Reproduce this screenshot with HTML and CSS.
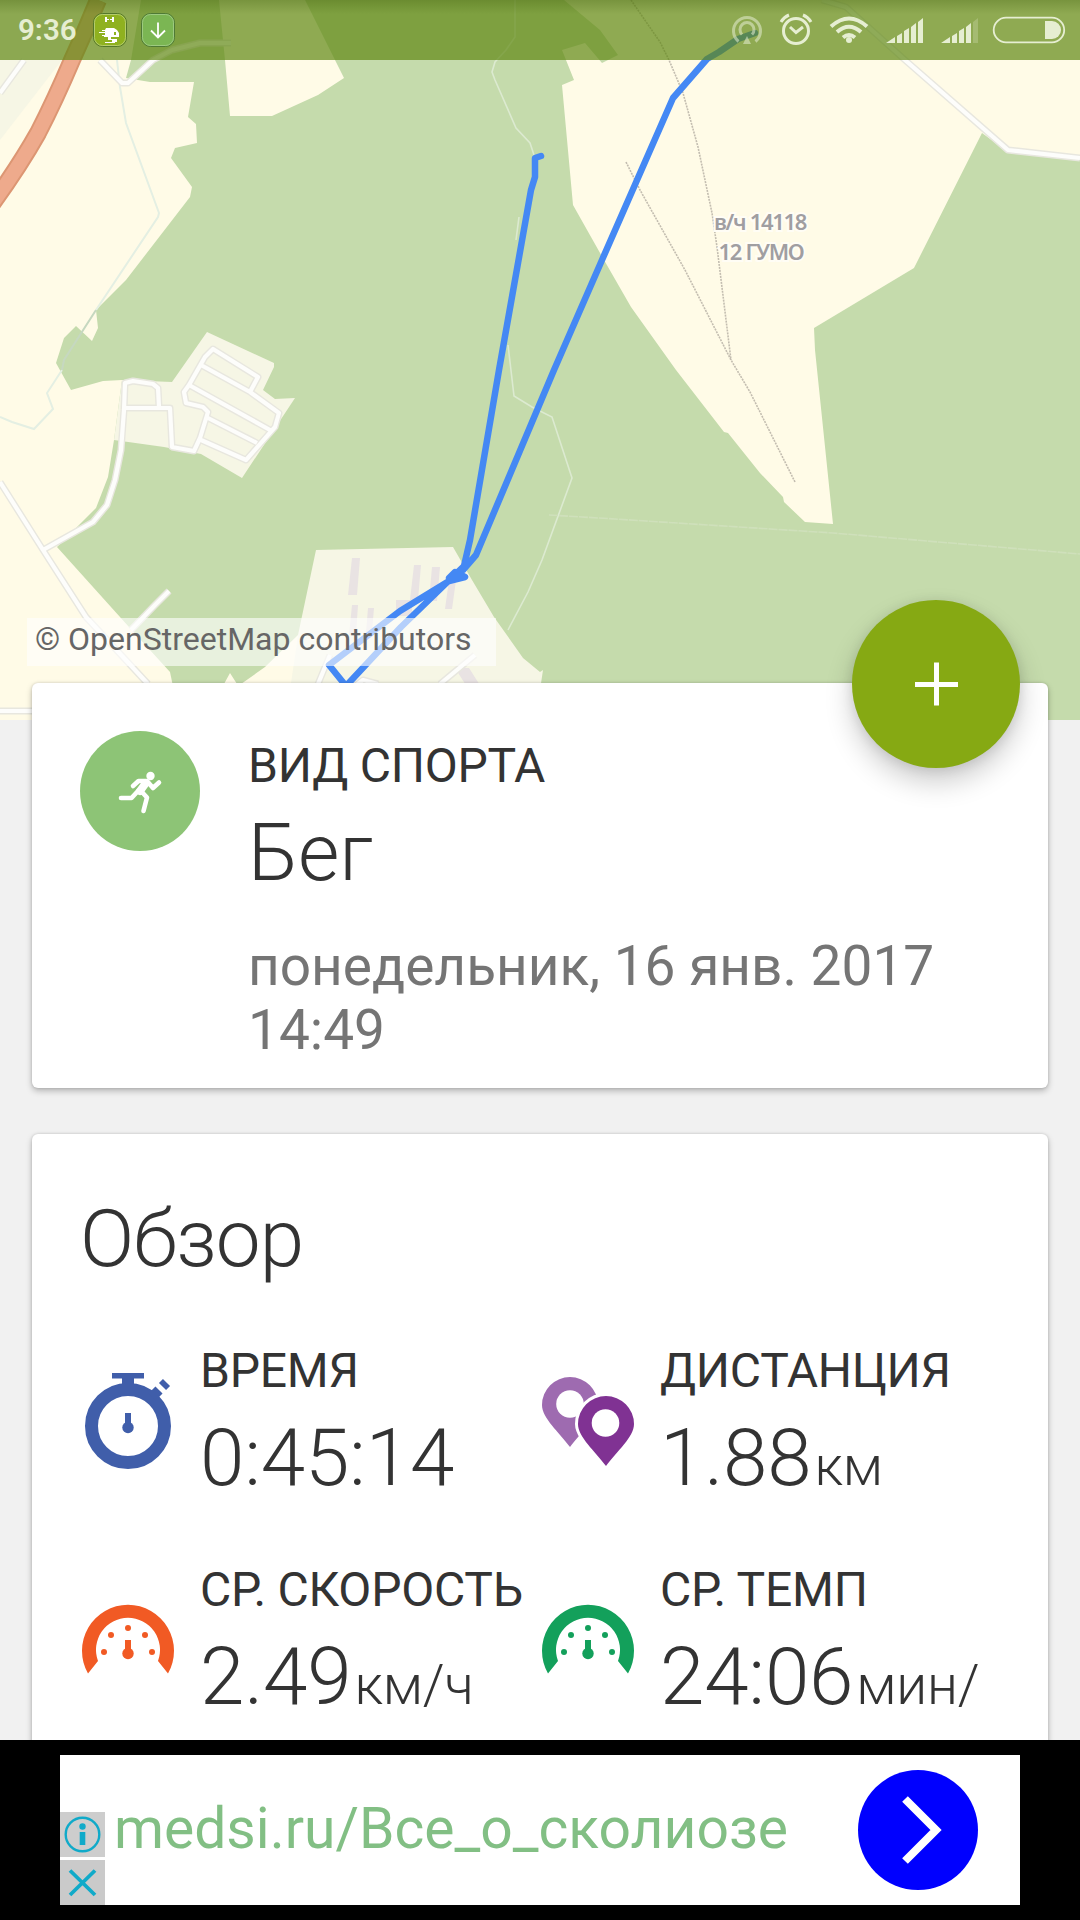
FILE: index.html
```html
<!DOCTYPE html>
<html lang="ru">
<head>
  <meta charset="UTF-8">
  <meta name="viewport" content="width=device-width, initial-scale=1.0">
  <title>Бег</title>
  <link rel="stylesheet" href="styles.css">
</head>
<body>
  <div class="screen">
    <header class="status-bar">
      <span class="clock">9:36</span>
      <svg class="app-icon" width="34" height="34" viewBox="0 0 34 34">
        <rect x=".5" y=".5" width="33" height="33" rx="9" fill="#8fb11f" stroke="#55782a"/>
        <rect x="1.5" y="1.5" width="31" height="31" rx="8" fill="none" stroke="#b5cc6c"/>
        <path d="M12 4h2v5h-2zM19 4h2v5h-2zM14 6h2v1h-2zM17 6h2v1h-2z" fill="#fff"/>
        <path d="M13 15h8l3 2 2 3v4h-8v2h6v3h-2v1H12v-1h7v-2h-4v-3h-4v-1H9v-1h3v-2H6v-1h6v-1H9v-1h3z" fill="#fff"/>
        <rect x="21" y="19" width="2" height="3" fill="#8fb11f"/>
      </svg>
      <svg class="app-icon" width="34" height="34" viewBox="0 0 34 34">
        <rect x=".5" y=".5" width="33" height="33" rx="9" fill="#7bb653" stroke="#4f7a35"/>
        <rect x="1.5" y="1.5" width="31" height="31" rx="8" fill="none" stroke="#9dca80"/>
        <path d="M17 9.5v15M10 17.500l7 7 7-7" fill="none" stroke="#fff" stroke-width="1.800"/>
      </svg>
      <svg class="system-icons" width="340" height="60" viewBox="730 0 340 60" fill="none" stroke="#e6eed2">
        <g stroke-width="3" opacity=".55">
          <path d="M738.500 41.500a13.500 13.500 0 1 1 17 0"/>
          <path d="M742 34.500a7 7 0 1 1 10 0"/>
          <path d="M747 36l4 8h-8z" fill="#e6eed2" stroke="none"/>
        </g>
        <g stroke-width="3">
          <circle cx="796" cy="31" r="12.500"/>
          <path d="M790 27l6 5.500 7-5.500"/>
          <path d="M781 22q3-5 8-7M811 22q-3-5-8-7"/>
        </g>
        <g stroke-width="4">
          <path d="M831 26.500q18-16 36 0"/>
          <path d="M837 32q12-10.500 24 0"/>
          <path d="M843 37.500q6-5 12 0"/>
          <circle cx="849" cy="40" r="3" fill="#e6eed2" stroke="none"/>
        </g>
        <g fill="#e6eed2" stroke="none">
          <path d="M886 43l9-6v6zM897 36l5-3v10h-5zM904 31l5-3v15h-5zM911 27l5-4v20h-5zM918 22l5-4v25h-5z"/>
          <path d="M941 43l9-6v6zM952 36l5-3v10h-5zM959 31l5-3v15h-5zM966 27l5-4v20h-5z"/>
          <path d="M973 22l5-4v25h-5z" opacity=".25"/>
          <path d="M1045 21h7a9 9 0 0 1 0 18h-7z"/>
        </g>
        <rect x="993.700" y="17.700" width="70.500" height="24.600" rx="12.300" stroke-width="1.800"/>
      </svg>
    </header>

    <div class="map">
      <svg width="1080" height="720" viewBox="0 0 1080 720">
        <rect width="1080" height="720" fill="#c5dbac"/>
        <!-- fields -->
        <g fill="#fffbe7">
          <path d="M0 0H141L131 60 126 78 150 82H194L188 117 196 124 197 143 175 148 171 158 192 187 190 197 126 280 96 310 98 328 92 341 76 326 64 338 56 363 71 390 103 381 122 380 114 440 108 477 96 508 57 547 129 627 170 672 180 720H0Z"/>
          <path d="M219 0 225 60 230 116H272L318 95 344 78 336 62 305 0Z"/>
          <path d="M564 0 600 30 618 55 602 63 585 43 562 50 574 80 562 85 573 205 604 260 631 307 676 370 724 432 728 433 760 473 783 497 784 502 805 522 833 524 815 350 814 328 914 268 982 133 1008 152 1080 158V0Z"/>
          <path d="M241 684 265 667 298 635 330 684ZM224 684 230 673 237 684Z"/>
        </g>
        <g fill="#f6f6e5">
          <path d="M0 0H90L62 60 0 140Z"/>
          <path d="M122 380 172 382 207 332 274 363V367L263 390 275 399 295 398 242 478 201 454 164 447 114 440Z"/>
          <path d="M316 550 453 547 472 580 494 617 523 658 540 672 543 670 540 690H290L298 635Z"/>
        </g>
        <!-- buildings -->
        <path d="M352 558h8l-3 37h-9zM414 565h7l-3 35h-8zM432 567h8l-3 34h-8zM449 580h7l-4 29h-7zM396 600h16v16h-16zM352 605h6l-2 30h-7zM368 608h6l-2 24h-6zM455 668h14l14 22h-14z" fill="#e9e3e3"/>
        <!-- motorway -->
        <path d="M98 0Q86 30 72 60Q55 100 38 133Q20 165 -8 204" fill="none" stroke="#dc9673" stroke-width="18"/>
        <path d="M98 0Q86 30 72 60Q55 100 38 133Q20 165 -8 204" fill="none" stroke="#eeaa8c" stroke-width="14"/>
        <!-- streams and paths -->
        <g fill="none" stroke-width="1.600">
          <path d="M117 60 120 87 126 123 159 213 158 217 96 310M62 370 47 393 53 409 34 429 12 422 0 417" stroke="#e4efe3" stroke-width="2"/>
          <path d="M96 310 64 360 62 370" stroke="#c6d8c0" stroke-width="2"/>
          <path d="M515 0V37L506 50 495 62 492 72 495 80 516 128 530 143 534 155M519 217 516 240M508 345 514 396 532 407 552 417 572 478 542 560 528 592 508 630" stroke="#dcead0"/>
          <path d="M549 515 599 518 833 533 1080 554" stroke="#cfe0bb" stroke-dasharray="9 1"/>
          <path d="M631 0 660 42 669 60 683 93 698 147 712 213 717 247 731 360M626 162 640 190 685 270 731 360 750 392 795 482" stroke="#c3bdb0" stroke-dasharray="2 1"/>
        </g>
        <!-- roads -->
        <g fill="none" stroke-linejoin="round">
          <g stroke="#e8e7df" stroke-width="7">
            <path d="M24 60 0 93M100 60 122 83H128L153 60 172 50 200 43H231M822 0 846 7 905 60 1008 150 1080 158"/>
            <path d="M0 482 43 550 86 617 148 684M43 550 93 522 107 505 115 480 121 450 124 410 125 383 133 381 153 384 158 388 159 407M0 711H40"/>
            <path d="M124 408H170L172 447 194 451 200 438 208 412 203 407 186 403 184 392 189 385 205 357 213 349 258 377 250 392M201 365 250 392 279 413 275 427 246 460 201 440M189 385 270 430M208 418 257 443"/>
            <path d="M169 591 155 605 131 630M318 684 330 655M440 684 475 655M350 690 363 680 378 684"/>
          </g>
          <g stroke="#fdfdfb" stroke-width="4.200">
            <path d="M24 60 0 93M100 60 122 83H128L153 60 172 50 200 43H231M822 0 846 7 905 60 1008 150 1080 158"/>
            <path d="M0 482 43 550 86 617 148 684M43 550 93 522 107 505 115 480 121 450 124 410 125 383 133 381 153 384 158 388 159 407M0 711H40"/>
            <path d="M124 408H170L172 447 194 451 200 438 208 412 203 407 186 403 184 392 189 385 205 357 213 349 258 377 250 392M201 365 250 392 279 413 275 427 246 460 201 440M189 385 270 430M208 418 257 443"/>
            <path d="M169 591 155 605 131 630M318 684 330 655M440 684 475 655M350 690 363 680 378 684"/>
          </g>
        </g>
        <!-- recorded track -->
        <path d="M755 33 738 39 719 52 707 59 673 98 602 260 554 370 476 555 463 570 449 578 455 572 465 577 449 581 400 611 329 665 346 686 401 627 464 566 470 540 499 370 531 190 535 177V158L541 156" fill="none" stroke="#4488f4" stroke-width="6.500" stroke-linejoin="round" stroke-linecap="round"/>
        <g class="map-label">
          <text x="760" y="230">в/ч 14118</text>
          <text x="761" y="260">12 ГУМО</text>
        </g>
      </svg>
      <div class="attribution">© OpenStreetMap contributors</div>
    </div>

    <main class="content">
      <section class="card sport-card">
        <button class="fab" aria-label="Добавить">
          <svg width="44" height="44" viewBox="0 0 44 44"><path d="M22.500 .5v43M1 22.500h43" stroke="#fff" stroke-width="5"/></svg>
        </button>
        <svg class="sport-icon" width="120" height="120" viewBox="0 0 120 120">
          <circle cx="60" cy="60" r="60" fill="#8dc476"/>
          <circle cx="70.500" cy="45" r="4.200" fill="#fff"/>
          <g fill="none" stroke="#fff" stroke-width="4.600" stroke-linecap="round" stroke-linejoin="round">
            <path d="M53 55 58.500 50H67L73 57 79 51.500"/>
            <path d="M58 60 51.500 67H41"/>
            <path d="M61 60 67 66.500 63.500 80"/>
            <path d="M65.500 52.500 60 60" stroke-width="8"/>
          </g>
        </svg>
        <div class="sport-info">
          <div class="label">ВИД СПОРТА</div>
          <div class="value">Бег</div>
          <div class="date">понедельник, 16 янв. 2017 14:49</div>
        </div>
      </section>

      <section class="card overview-card">
        <h2>Обзор</h2>
        <div class="stats">
          <div class="stat">
            <svg width="118" height="166" viewBox="0 0 118 166" fill="#405eaa">
              <circle cx="46" cy="87" r="36.500" fill="none" stroke="#405eaa" stroke-width="13"/>
              <path d="M30 34h32v5.500H52V48H40v-8.500H30zM43 74h6v12h-6z"/>
              <circle cx="46" cy="88.500" r="5.700"/>
              <path d="M70 58l7-7M80.500 47.500l4-4" stroke="#405eaa" stroke-width="10"/>
            </svg>
            <div>
              <div class="label">ВРЕМЯ</div>
              <div class="value">0:45:14</div>
            </div>
          </div>
          <div class="stat">
            <svg width="118" height="166" viewBox="0 0 118 166">
              <path d="M28 108C17 93 0 79 0 66a28 28 0 0 1 56 0C56 79 39 93 28 108Z" fill="#9e6bb0"/>
              <circle cx="28" cy="65" r="13.800" fill="#fff"/>
              <path d="M64 127C53 112 36 98 36 85a28 28 0 0 1 56 0C92 98 75 112 64 127Z" fill="#803293" stroke="#fff" stroke-width="6" paint-order="stroke"/>
              <circle cx="63.500" cy="84" r="13.800" fill="#fff"/>
            </svg>
            <div>
              <div class="label">ДИСТАНЦИЯ</div>
              <div class="value">1.88<span class="unit">км</span></div>
            </div>
          </div>
          <div class="stat">
            <svg class="gauge-orange" width="118" height="166" viewBox="0 0 118 166">
              <path d="M6 115.500A46 46 0 1 1 86 115.500L76 103A32 32 0 1 0 16 103Z"/>
              <path d="M43 82h6v10h-6z"/>
              <circle cx="46" cy="95.500" r="5.700"/>
              <circle cx="22" cy="94" r="3"/><circle cx="29" cy="77" r="3"/><circle cx="46" cy="70" r="3"/><circle cx="63" cy="77" r="3"/><circle cx="70" cy="94" r="3"/>
            </svg>
            <div>
              <div class="label">СР. СКОРОСТЬ</div>
              <div class="value">2.49<span class="unit">км/ч</span></div>
            </div>
          </div>
          <div class="stat">
            <svg class="gauge-green" width="118" height="166" viewBox="0 0 118 166">
              <path d="M6 115.500A46 46 0 1 1 86 115.500L76 103A32 32 0 1 0 16 103Z"/>
              <path d="M43 82h6v10h-6z"/>
              <circle cx="46" cy="95.500" r="5.700"/>
              <circle cx="22" cy="94" r="3"/><circle cx="29" cy="77" r="3"/><circle cx="46" cy="70" r="3"/><circle cx="63" cy="77" r="3"/><circle cx="70" cy="94" r="3"/>
            </svg>
            <div>
              <div class="label">СР. ТЕМП</div>
              <div class="value">24:06<span class="unit">мин/</span></div>
            </div>
          </div>
        </div>
      </section>
    </main>

    <footer class="ad">
      <div class="ad-banner">
        <div class="ad-controls">
          <svg width="45" height="45" viewBox="0 0 45 45">
            <rect width="45" height="45" fill="#cdcdcd"/>
            <circle cx="22.500" cy="22.500" r="16.800" fill="none" stroke="#10aac9" stroke-width="2.400"/>
            <circle cx="22.500" cy="14.500" r="3.200" fill="#10aac9"/>
            <rect x="19.700" y="20" width="5.600" height="13" fill="#10aac9"/>
          </svg>
          <svg width="45" height="45" viewBox="0 0 45 45">
            <rect width="45" height="45" fill="#cacaca"/>
            <path d="M10 10.500 35 35M35 10.500 10 35" stroke="#10aac9" stroke-width="3.800"/>
          </svg>
        </div>
        <span class="ad-text">medsi.ru/Все_о_сколиозе</span>
        <svg class="ad-arrow" width="120" height="120" viewBox="0 0 120 120">
          <circle cx="60" cy="60" r="60" fill="#00f"/>
          <path d="M47 29 78 60 47 91" fill="none" stroke="#fff" stroke-width="8"/>
        </svg>
      </div>
    </footer>
  </div>
</body>
</html>
```
FILE: styles.css
```css
* {
  margin: 0;
  padding: 0;
  box-sizing: border-box;
}

body {
  font-family: Roboto, "Noto Sans", sans-serif;
  background: #f1f1f1;
  color: #333;
}

.screen {
  position: relative;
  display: flex;
  flex-direction: column;
  width: 1080px;
  height: 1920px;
  overflow: hidden;
}

/* overlays the map */
.status-bar {
  position: absolute;
  top: 0;
  left: 0;
  z-index: 2;
  width: 100%;
  height: 60px;
  display: flex;
  align-items: center;
  padding: 0 10px 0 18px;
  background: linear-gradient(rgba(50, 80, 0, 0.25), transparent 14px), rgba(95, 135, 18, 0.7);
}

.clock {
  width: 75px;
  font-size: 29.5px;
  font-weight: 600;
  line-height: 60px;
  color: #e6eed2;
}

.app-icon {
  margin-right: 14px;
}

.system-icons {
  margin-left: auto;
}

.map {
  position: relative;
  flex: none;
  height: 720px;
}

.map svg {
  display: block;
}

.map-label {
  font-family: "Noto Sans", sans-serif;
  font-size: 22px;
  font-weight: 600;
  letter-spacing: -1.3px;
  fill: #a09ea1;
  stroke: #fffdf5;
  stroke-width: 4px;
  paint-order: stroke;
  text-anchor: middle;
}

.attribution {
  position: absolute;
  left: 27px;
  top: 618px;
  width: 469px;
  height: 48px;
  padding-left: 8px;
  font-size: 32px;
  line-height: 43px;
  color: #666;
  white-space: nowrap;
  background: rgba(255, 255, 255, 0.6);
}

.content {
  position: relative;
  flex: 1;
  min-height: 0;
  margin-top: -37px;
  padding: 0 32px;
}

.card {
  background: #fff;
  border-radius: 6px;
  box-shadow: 0 3px 6px rgba(0, 0, 0, 0.25), 0 0 3px rgba(0, 0, 0, 0.15);
}

.sport-card {
  position: relative;
  display: flex;
  height: 405px;
  padding: 48px 48px 0;
  margin-bottom: 46px;
}

.sport-info {
  width: 720px;
  margin: 3px 0 0 48px;
}

.label {
  font-size: 48px;
  line-height: 64px;
  letter-spacing: -0.25px;
  white-space: nowrap;
}

.value {
  margin-top: 8px;
  font-size: 80px;
  font-weight: 300;
  line-height: 94px;
  letter-spacing: -0.2px;
  white-space: nowrap;
}

.date {
  margin-top: 34px;
  font-size: 55px;
  line-height: 64px;
  color: #757575;
}

.fab {
  position: absolute;
  top: -83px;
  right: 28px;
  width: 168px;
  height: 168px;
  display: flex;
  align-items: center;
  justify-content: center;
  border: none;
  border-radius: 50%;
  background: #86a913;
  box-shadow: 0 14px 28px rgba(0, 0, 0, 0.2), 0 2px 12px rgba(0, 0, 0, 0.1);
}

.overview-card {
  height: 700px;
  padding: 58px 0 0 50px;
}

.overview-card h2 {
  margin-left: -2px;
  font-size: 80px;
  font-weight: 300;
  line-height: 94px;
  letter-spacing: -1px;
}

.stats {
  display: grid;
  grid-template-columns: 460px 460px;
  row-gap: 53px;
  margin-top: 53px;
}

.stat {
  display: flex;
}

.stat svg {
  flex: none;
}

.unit {
  margin-left: 3px;
  font-size: 55px;
  line-height: 1;
}

.gauge-orange {
  fill: #f15a24;
}

.gauge-green {
  fill: #13a05b;
}

.ad {
  position: relative;
  flex: none;
  height: 180px;
  padding: 15px 60px;
  background: #000;
}

.ad-banner {
  display: flex;
  align-items: center;
  height: 150px;
  padding-right: 42px;
  background: #fff;
}

.ad-controls {
  display: flex;
  flex-direction: column;
  align-self: flex-end;
  gap: 3px;
}

.ad-controls svg {
  display: block;
}

.ad-text {
  margin: 0 0 2px 9px;
  font-size: 57px;
  line-height: 64px;
  color: #82bf84;
  white-space: nowrap;
}

.ad-arrow {
  margin-left: auto;
}
```
